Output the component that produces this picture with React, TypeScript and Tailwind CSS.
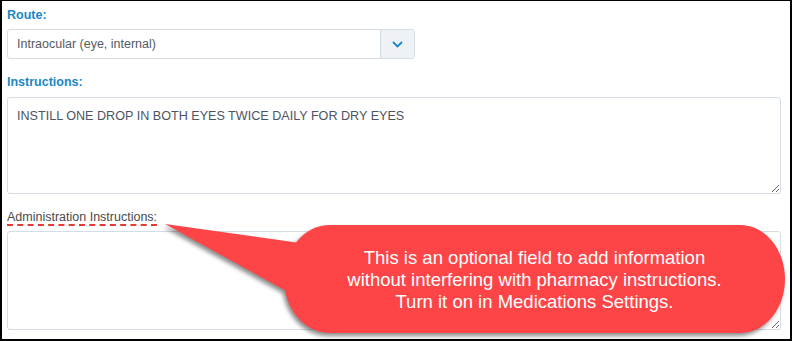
import React from 'react';

const font = "font-['Liberation_Sans',Arial,sans-serif]";

function FieldLabel({ children }: { children: React.ReactNode }) {
  return <div className="text-[12.5px] leading-[14px] font-bold text-[#1b86c6]">{children}</div>;
}

function Callout() {
  return (
    <div className="pointer-events-none absolute left-0 top-0 h-[341px] w-[792px]">
      <svg width="792" height="341" className="absolute left-0 top-0">
        <g fill="#fd4447" style={{ filter: 'drop-shadow(-2px 3px 2px rgba(0,0,0,0.45))' }}>
          <path d="M 330 225 H 740 A 45 54 0 0 1 785 279 A 45 54 0 0 1 740 333 H 330 A 46 54 0 0 1 284 279 A 46 54 0 0 1 330 225 Z" />
          <polygon points="165,224 300,243 288,292" />
        </g>
      </svg>
      <div className="absolute left-[284px] top-[226px] flex h-[108px] w-[501px] items-center justify-center text-center text-[18.5px] leading-[22px] text-white">
        <p>
          This is an optional field to add information
          <br />
          without interfering with pharmacy instructions.
          <br />
          Turn it on in Medications Settings.
        </p>
      </div>
    </div>
  );
}

export default function App() {
  return (
    <div className={`relative h-[341px] w-[792px] overflow-hidden bg-white ${font}`}>
      <div className="flex h-full w-full flex-col border-t border-r-2 border-b-2 border-l-2 border-black pt-[7px] pr-[9px] pl-[5px]">
        <FieldLabel>Route:</FieldLabel>
        <div className="mt-[7px] flex h-[30px] w-[408px] overflow-hidden rounded-[3px] border border-[#d6dce4] bg-white">
          <div className="flex flex-1 items-center pl-[9px] text-[12.5px] text-[#555a63]">Intraocular (eye, internal)</div>
          <div className="flex w-[34px] items-center justify-center border-l border-[#d6dce4] bg-[#eef1f5]">
            <svg width="11" height="7" viewBox="0 0 11 7">
              <path d="M1 1 L5.5 5.5 L10 1" fill="none" stroke="#1b86c6" strokeWidth="1.8" />
            </svg>
          </div>
        </div>

        <div className="mt-[16px]">
          <FieldLabel>Instructions:</FieldLabel>
        </div>
        <textarea
          readOnly
          defaultValue="INSTILL ONE DROP IN BOTH EYES TWICE DAILY FOR DRY EYES"
          className="mt-[8px] block h-[97px] w-full rounded-[3px] border border-[#d6dce4] px-[9px] py-[8px] text-[12.6px] leading-[20px] text-[#4d5360] outline-none"
        />

        <div className="mt-[16px] text-[12.5px] leading-[14px] text-[#4a4a4a]">
          <span className="underline decoration-[#e53935] decoration-dashed decoration-2 underline-offset-[3px]">
            Administration Instructions:
          </span>
        </div>
        <textarea
          readOnly
          className="mt-[7px] block h-[99px] w-full rounded-[3px] border border-[#d6dce4] px-[9px] py-[8px] text-[12.6px] leading-[20px] text-[#4d5360] outline-none"
        />
      </div>
      <Callout />
    </div>
  );
}
